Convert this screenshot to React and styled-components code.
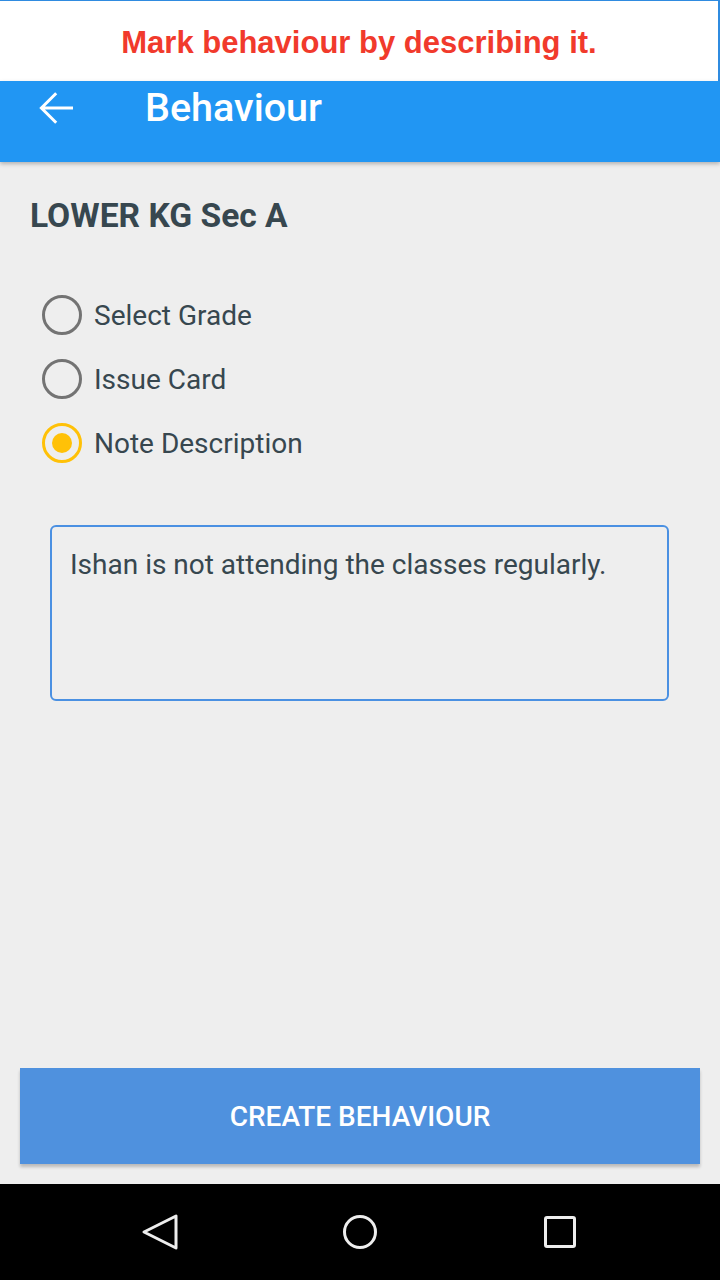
import React, { useState } from "react";
import styled, { createGlobalStyle } from "styled-components";

const Global = createGlobalStyle`
  html, body { margin: 0; padding: 0; background: #eeeeee; }
  * { box-sizing: border-box; }
`;

const Screen = styled.div`
  width: 720px;
  height: 1280px;
  display: flex;
  flex-direction: column;
  background: #eeeeee;
  font-family: Roboto, "Noto Sans", sans-serif;
  overflow: hidden;
`;

const Banner = styled.div`
  height: 81px;
  background: #fff;
  border-top: 1px solid #2f8be0;
  border-right: 2px solid #2f8be0;
  display: flex;
  align-items: center;
  justify-content: center;
  color: #f13a2c;
  font-family: "Liberation Sans", Arial, sans-serif;
  font-weight: bold;
  font-size: 31px;
  padding-top: 3px;
`;

const AppBar = styled.div`
  height: 81px;
  background: #2196f3;
  display: flex;
  align-items: flex-start;
  padding-top: 5px;
  box-shadow: 0 2px 4px rgba(0, 0, 0, 0.25);
  position: relative;
  z-index: 1;
`;

const BackBtn = styled.div`
  width: 145px;
  height: 44px;
  display: flex;
  align-items: center;
  padding-left: 33px;
`;

const Title = styled.div`
  color: #fff;
  font-size: 39.5px;
  font-weight: 500;
  line-height: 44px;
`;

const Content = styled.div`
  flex: 1;
  display: flex;
  flex-direction: column;
  padding: 0 20px;
`;

const ClassName = styled.div`
  margin: 34px 0 0 10px;
  color: #37474f;
  font-size: 33.6px;
  font-weight: bold;
  line-height: 40px;
`;

const RadioList = styled.div`
  display: flex;
  flex-direction: column;
  gap: 24px;
  margin: 59px 0 0 22px;
`;

const RadioRow = styled.label`
  display: flex;
  align-items: center;
  height: 40px;
  cursor: pointer;
`;

const Circle = styled.span`
  width: 40px;
  height: 40px;
  border-radius: 50%;
  border: 3px solid ${(p) => (p.$on ? "#ffc107" : "#737373")};
  display: flex;
  align-items: center;
  justify-content: center;
  margin-right: 12px;
  &::after {
    content: "";
    width: 20px;
    height: 20px;
    border-radius: 50%;
    background: #ffc107;
    display: ${(p) => (p.$on ? "block" : "none")};
  }
`;

const RadioText = styled.span`
  color: #37474f;
  font-size: 28px;
`;

const NoteBox = styled.div`
  margin: 62px 31px 0 30px;
  height: 176px;
  border: 2px solid #4a90e2;
  border-radius: 6px;
  padding: 21px 18px;
  color: #37474f;
  font-size: 28px;
  line-height: 34px;
`;

const Spacer = styled.div`
  flex: 1;
`;

const CreateButton = styled.div`
  height: 96px;
  margin-bottom: 20px;
  background: #4f91de;
  color: #fff;
  display: flex;
  align-items: center;
  justify-content: center;
  font-size: 28px;
  font-weight: 500;
  box-shadow: 0 3px 3px rgba(0, 0, 0, 0.22);
`;

const NavBar = styled.div`
  height: 96px;
  background: #000;
  display: flex;
  align-items: center;
  justify-content: space-between;
  padding: 0 140px;
`;

const NavIcon = styled.svg`
  width: 40px;
  height: 40px;
`;

const options = ["Select Grade", "Issue Card", "Note Description"];

export default function App() {
  const [sel, setSel] = useState(2);
  return (
    <Screen>
      <Global />
      <Banner>Mark behaviour by describing it.</Banner>
      <AppBar>
        <BackBtn>
          <svg width="48" height="48" viewBox="0 0 24 24">
            <path d="M20 12H4.6M11.6 4.6L4.2 12l7.4 7.4" fill="none" stroke="#fff" strokeWidth="1.5" />
          </svg>
        </BackBtn>
        <Title>Behaviour</Title>
      </AppBar>
      <Content>
        <ClassName>LOWER KG Sec A</ClassName>
        <RadioList>
          {options.map((o, i) => (
            <RadioRow key={o} onClick={() => setSel(i)}>
              <Circle $on={sel === i} />
              <RadioText>{o}</RadioText>
            </RadioRow>
          ))}
        </RadioList>
        <NoteBox>Ishan is not attending the classes regularly.</NoteBox>
        <Spacer />
        <CreateButton>CREATE BEHAVIOUR</CreateButton>
      </Content>
      <NavBar>
        <NavIcon viewBox="0 0 40 40">
          <path d="M36 4 L36 36 L4 20 Z" fill="none" stroke="#eee" strokeWidth="3" strokeLinejoin="round" />
        </NavIcon>
        <NavIcon viewBox="0 0 40 40">
          <circle cx="20" cy="20" r="15.5" fill="none" stroke="#eee" strokeWidth="3" />
        </NavIcon>
        <NavIcon viewBox="0 0 40 40">
          <rect x="5.5" y="5.5" width="29" height="29" rx="1.5" fill="none" stroke="#eee" strokeWidth="3" />
        </NavIcon>
      </NavBar>
    </Screen>
  );
}
